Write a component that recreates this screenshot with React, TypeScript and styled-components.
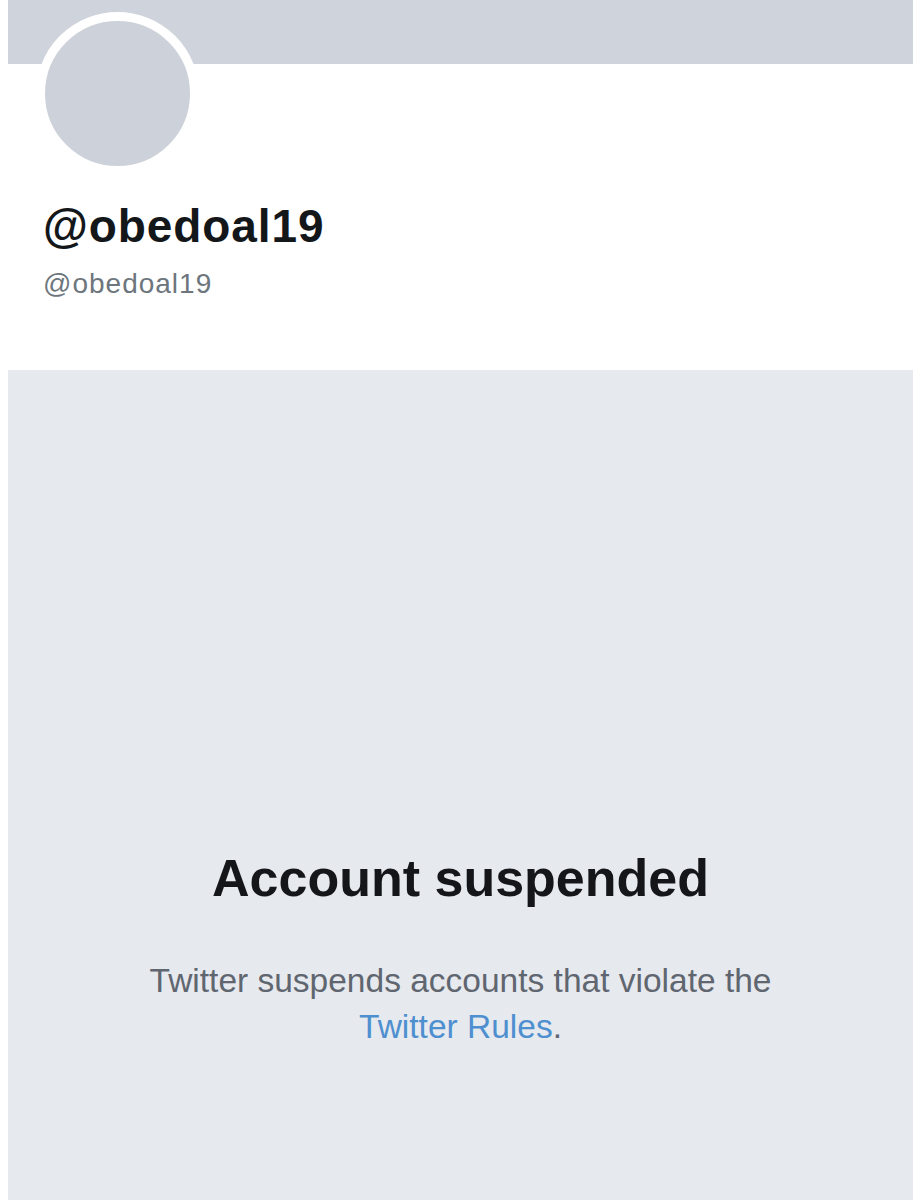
import React from "react";
import styled, { createGlobalStyle } from "styled-components";

const GlobalStyle = createGlobalStyle`
  html, body { margin: 0; padding: 0; background: #ffffff; }
  body { font-family: "Liberation Sans", Arial, sans-serif; }
  * { box-sizing: border-box; }
`;

const Page = styled.div`
  width: 920px;
  height: 1200px;
  overflow: hidden;
  padding: 0 7px 0 8px;
  display: flex;
  flex-direction: column;
  background: #ffffff;
`;

const Banner = styled.div`
  height: 64px;
  background: #cfd4dc;
  flex: none;
`;

const Profile = styled.section`
  display: flex;
  flex-direction: column;
  align-items: flex-start;
  height: 306px;
  flex: none;
`;

const Avatar = styled.div`
  width: 163px;
  height: 163px;
  margin: -52px 0 0 28px;
  border-radius: 50%;
  border: 9px solid #ffffff;
  background: #cdd2da;
`;

const DisplayName = styled.h1`
  margin: 24px 0 0 35px;
  font-family: "Liberation Sans", Arial, sans-serif;
  font-weight: 700;
  font-size: 46px;
  line-height: 54px;
  letter-spacing: 0.9px;
  color: #14171a;
`;

const Handle = styled.div`
  margin: 14px 0 0 35px;
  font-family: "Liberation Sans", Arial, sans-serif;
  font-size: 28px;
  line-height: 34px;
  letter-spacing: 1px;
  color: #6e767d;
`;

const Suspended = styled.section`
  flex: 1;
  background: #e6e9ee;
  display: flex;
  flex-direction: column;
  align-items: center;
  padding-top: 478px;
`;

const Title = styled.h2`
  margin: 0;
  font-family: "Liberation Sans", Arial, sans-serif;
  font-weight: 700;
  font-size: 52px;
  line-height: 60px;
  color: #141619;
`;

const Message = styled.p`
  margin: 50px 0 0;
  max-width: 650px;
  text-align: center;
  font-family: "Liberation Sans", Arial, sans-serif;
  font-size: 33.5px;
  line-height: 46px;
  color: #5f6670;
`;

const RulesLink = styled.a`
  color: #4e8fd0;
  text-decoration: none;
`;

export default function App() {
  return (
    <>
      <GlobalStyle />
      <Page>
        <Banner />
        <Profile>
          <Avatar />
          <DisplayName>@obedoal19</DisplayName>
          <Handle>@obedoal19</Handle>
        </Profile>
        <Suspended>
          <Title>Account suspended</Title>
          <Message>
            Twitter suspends accounts that violate the{" "}
            <RulesLink href="#">Twitter Rules</RulesLink>.
          </Message>
        </Suspended>
      </Page>
    </>
  );
}
